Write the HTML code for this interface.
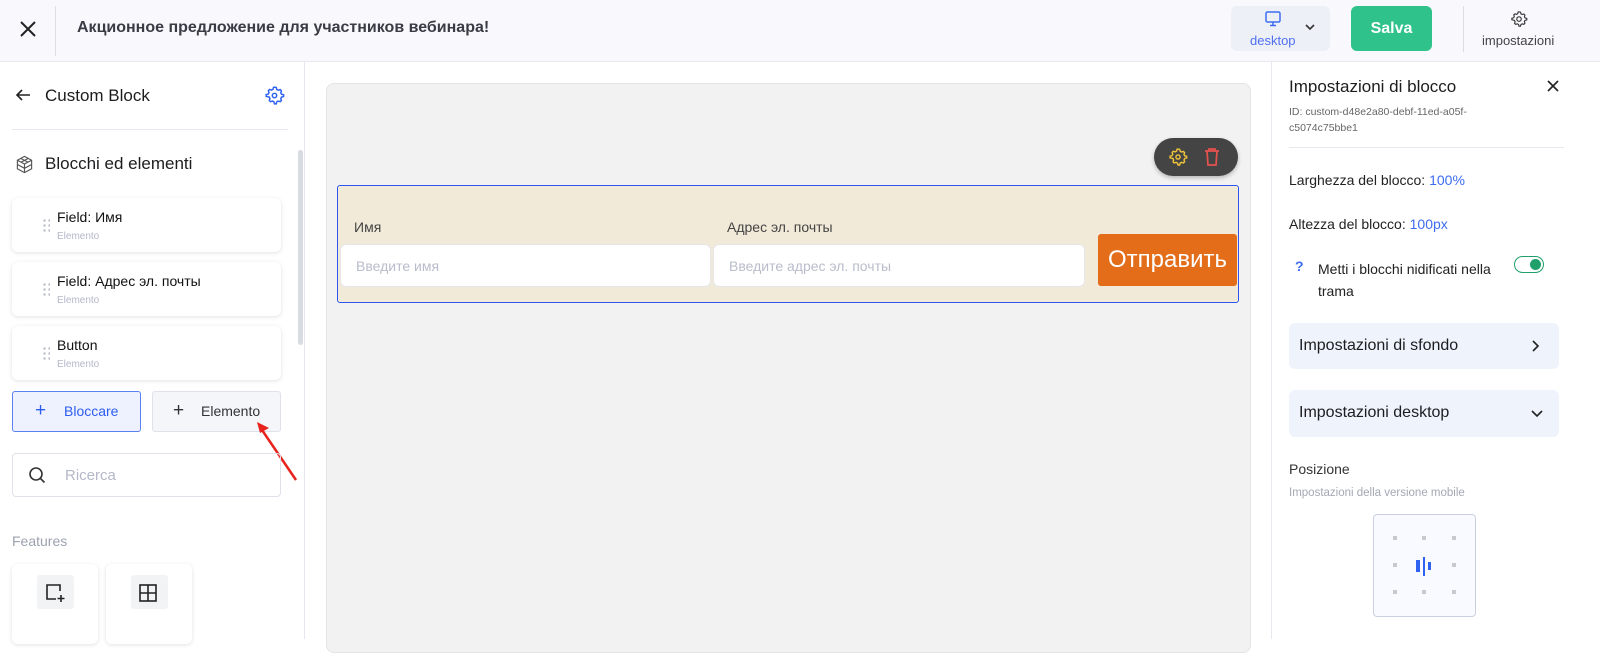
<!DOCTYPE html>
<html><head><meta charset="utf-8"><style>
*{box-sizing:border-box;margin:0;padding:0}
body{width:1600px;height:639px;overflow:hidden;font-family:"Liberation Sans","DejaVu Sans",sans-serif;background:#fff;position:relative;color:#1d1d1f}
.abs{position:absolute}
.top{left:0;top:0;width:1600px;height:62px;background:#f9f9fd;border-bottom:1px solid #e6e7ef}
.card{background:#fff;border-radius:6px;box-shadow:0 1px 4px rgba(0,0,0,.12)}
.it{left:12px;width:269px;height:54px}
.it .t{position:absolute;left:45px;top:11px;font-size:14px;color:#111}
.it .s{position:absolute;left:45px;top:33px;font-size:10px;color:#b4b8c8}
.it .d{position:absolute;left:30px;top:20px;width:8px;height:14px;background-image:radial-gradient(circle,#b8bcc8 1.2px,transparent 1.3px);background-size:5px 5px}
.dot{position:absolute;width:4px;height:4px;background:#c7c9cf}
</style></head><body>
<div class="abs top"></div>
<svg class="abs" style="left:18px;top:19px" width="20" height="20" viewBox="0 0 20 20"><path d="M3 3L17 17M17 3L3 17" stroke="#222" stroke-width="2"/></svg>
<div class="abs" style="left:55px;top:6px;width:1px;height:50px;background:#dedfe5"></div>
<div class="abs" style="left:77px;top:19px;font-size:16px;font-weight:bold;color:#3b3b45">Акционное предложение для участников вебинара!</div>
<div class="abs" style="left:1231px;top:6px;width:99px;height:45px;background:#eef0f8;border-radius:6px"></div>
<svg class="abs" style="left:1264px;top:11px" width="18" height="16" viewBox="0 0 18 16"><rect x="2" y="1" width="14" height="10" rx="1.5" fill="none" stroke="#3d6cf0" stroke-width="1.5"/><path d="M9 11v3M6 14.5h6" stroke="#3d6cf0" stroke-width="1.5"/></svg>
<div class="abs" style="left:1250px;top:33px;font-size:13px;color:#4f6ef0">desktop</div>
<svg class="abs" style="left:1304px;top:23px" width="12" height="8" viewBox="0 0 12 8"><path d="M2 2l4 4 4-4" stroke="#333" stroke-width="1.6" fill="none"/></svg>
<div class="abs" style="left:1351px;top:6px;width:81px;height:45px;background:#2fc28a;border-radius:6px;color:#fff;font-weight:bold;font-size:16px;text-align:center;line-height:45px">Salva</div>
<div class="abs" style="left:1463px;top:6px;width:1px;height:46px;background:#dcdde3"></div>
<svg class="abs" style="left:1510px;top:10px" width="18" height="18" viewBox="0 0 24 24"><path d="M12 2.5l2 .3.6 2.3 1.6.9 2.3-.7 1.4 1.4-.7 2.3.9 1.6 2.3.6v2l-2.3.6-.9 1.6.7 2.3-1.4 1.4-2.3-.7-1.6.9-.6 2.3h-2l-.6-2.3-1.6-.9-2.3.7-1.4-1.4.7-2.3-.9-1.6L2.5 13v-2l2.3-.6.9-1.6-.7-2.3 1.4-1.4 2.3.7 1.6-.9.6-2.3z" fill="none" stroke="#333" stroke-width="1.5"/><circle cx="12" cy="12" r="3" fill="none" stroke="#333" stroke-width="1.5"/></svg>
<div class="abs" style="left:1482px;top:33px;font-size:13px;color:#444">impostazioni</div>

<!-- left panel -->
<div class="abs" style="left:304px;top:62px;width:1px;height:577px;background:#e6e7ef"></div>
<div class="abs" style="left:298px;top:150px;width:5px;height:195px;background:#d9dbe2;border-radius:3px"></div>
<svg class="abs" style="left:15px;top:88px" width="16" height="14" viewBox="0 0 16 14"><path d="M15 7H2M7 2L2 7l5 5" stroke="#222" stroke-width="1.6" fill="none"/></svg>
<div class="abs" style="left:45px;top:86px;font-size:17px">Custom Block</div>
<svg class="abs" style="left:264px;top:85px" width="21" height="21" viewBox="0 0 24 24"><path d="M12 2.5l2 .3.6 2.3 1.6.9 2.3-.7 1.4 1.4-.7 2.3.9 1.6 2.3.6v2l-2.3.6-.9 1.6.7 2.3-1.4 1.4-2.3-.7-1.6.9-.6 2.3h-2l-.6-2.3-1.6-.9-2.3.7-1.4-1.4.7-2.3-.9-1.6L2.5 13v-2l2.3-.6.9-1.6-.7-2.3 1.4-1.4 2.3.7 1.6-.9.6-2.3z" fill="none" stroke="#2f62f0" stroke-width="1.7"/><circle cx="12" cy="12" r="2.5" fill="none" stroke="#2f62f0" stroke-width="1.7"/></svg>
<div class="abs" style="left:12px;top:129px;width:276px;height:1px;background:#e8e9ef"></div>
<svg class="abs" style="left:15px;top:155px" width="19" height="19" viewBox="0 0 20 20"><path d="M10 1.5l7.5 4v9L10 18.5l-7.5-4v-9z M2.5 5.5L10 9.5l7.5-4 M10 9.5v9 M6 3.5l7.5 4M14 3.5L6.5 7.5M2.5 10L10 14l7.5-4" fill="none" stroke="#555" stroke-width="1.2"/></svg>
<div class="abs" style="left:45px;top:154px;font-size:17px">Blocchi ed elementi</div>
<div class="abs card it" style="top:198px"><div class="d"></div><div class="t">Field: Имя</div><div class="s">Elemento</div></div>
<div class="abs card it" style="top:262px"><div class="d"></div><div class="t">Field: Адрес эл. почты</div><div class="s">Elemento</div></div>
<div class="abs card it" style="top:326px"><div class="d"></div><div class="t">Button</div><div class="s">Elemento</div></div>
<div class="abs" style="left:12px;top:391px;width:129px;height:41px;border:1px solid #5a80f2;background:#eef2fe;border-radius:3px;color:#2d5cf0;font-size:14px"><span style="position:absolute;left:22px;top:8px;font-size:19px">+</span><span style="position:absolute;left:51px;top:11px">Bloccare</span></div>
<div class="abs" style="left:152px;top:391px;width:129px;height:41px;border:1px solid #dfe2ea;background:#f4f6fa;border-radius:3px;color:#333;font-size:14px"><span style="position:absolute;left:20px;top:8px;font-size:19px">+</span><span style="position:absolute;left:48px;top:11px">Elemento</span></div>
<svg class="abs" style="left:250px;top:418px" width="50" height="66" viewBox="0 0 50 66"><path d="M46 62L12 12" stroke="#e8221c" stroke-width="2.5"/><path d="M7 4l12 6-9 5z" fill="#e8221c"/></svg>
<div class="abs" style="left:12px;top:453px;width:269px;height:44px;border:1px solid #dfe2ea;border-radius:4px"></div>
<svg class="abs" style="left:28px;top:466px" width="18" height="18" viewBox="0 0 18 18"><circle cx="8" cy="8" r="6" fill="none" stroke="#333" stroke-width="1.6"/><path d="M12.5 12.5l4 4" stroke="#333" stroke-width="1.6"/></svg>
<div class="abs" style="left:65px;top:467px;font-size:15px;color:#b4b8c8">Ricerca</div>
<div class="abs" style="left:12px;top:533px;font-size:14px;color:#9da2b0">Features</div>
<div class="abs card" style="left:12px;top:564px;width:86px;height:80px"></div>
<div class="abs card" style="left:106px;top:564px;width:86px;height:80px"></div>
<div class="abs" style="left:37px;top:575px;width:37px;height:34px;background:#f2f3f5;border-radius:3px"></div>
<div class="abs" style="left:131px;top:575px;width:37px;height:34px;background:#f2f3f5;border-radius:3px"></div>
<svg class="abs" style="left:44px;top:582px" width="22" height="22" viewBox="0 0 22 22"><path d="M16 9V3H3v14h9M17 13v7M13.5 16.5h7" fill="none" stroke="#222" stroke-width="1.6"/></svg>
<svg class="abs" style="left:138px;top:583px" width="20" height="20" viewBox="0 0 20 20"><rect x="2" y="2" width="16" height="16" fill="none" stroke="#222" stroke-width="1.6"/><path d="M10 2v16M2 10h16" stroke="#222" stroke-width="1.6"/></svg>

<!-- canvas -->
<div class="abs" style="left:326px;top:83px;width:925px;height:570px;background:#f2f2f2;border:1px solid #e4e4e6;border-radius:8px"></div>
<div class="abs" style="left:1154px;top:138px;width:84px;height:38px;background:#444;border-radius:19px;box-shadow:0 2px 4px rgba(0,0,0,.25)"></div>
<svg class="abs" style="left:1168px;top:147px" width="20" height="20" viewBox="0 0 24 24"><path d="M12 2.5l2 .3.6 2.3 1.6.9 2.3-.7 1.4 1.4-.7 2.3.9 1.6 2.3.6v2l-2.3.6-.9 1.6.7 2.3-1.4 1.4-2.3-.7-1.6.9-.6 2.3h-2l-.6-2.3-1.6-.9-2.3.7-1.4-1.4.7-2.3-.9-1.6L2.5 13v-2l2.3-.6.9-1.6-.7-2.3 1.4-1.4 2.3.7 1.6-.9.6-2.3z" fill="none" stroke="#f0c53a" stroke-width="1.7"/><circle cx="12" cy="12" r="2.5" fill="none" stroke="#f0c53a" stroke-width="1.7"/></svg>
<svg class="abs" style="left:1203px;top:147px" width="18" height="20" viewBox="0 0 18 20"><path d="M2 4h14M6 4V2h6v2M4 4l1 14h8l1-14" fill="none" stroke="#e9514f" stroke-width="1.7"/></svg>
<div class="abs" style="left:337px;top:185px;width:902px;height:118px;background:#f2ead9;border:1.5px solid #2f55f0;border-radius:3px"></div>
<div class="abs" style="left:354px;top:219px;font-size:14px;color:#444">Имя</div>
<div class="abs" style="left:727px;top:219px;font-size:14px;color:#444">Адрес эл. почты</div>
<div class="abs" style="left:340px;top:244px;width:371px;height:43px;background:#fff;border:1px solid #e6e6ea;border-radius:6px;font-size:14px;color:#b9bccb;padding:13px 0 0 15px">Введите имя</div>
<div class="abs" style="left:713px;top:244px;width:372px;height:43px;background:#fff;border:1px solid #e6e6ea;border-radius:6px;font-size:14px;color:#b9bccb;padding:13px 0 0 15px">Введите адрес эл. почты</div>
<div class="abs" style="left:1098px;top:234px;width:139px;height:52px;background:#e36d19;border-radius:3px;color:#fff;font-size:24px;text-align:center;line-height:52px">Отправить</div>

<!-- right panel -->
<div class="abs" style="left:1271px;top:62px;width:1px;height:577px;background:#e8e9ef"></div>
<div class="abs" style="left:1289px;top:77px;font-size:17px">Impostazioni di blocco</div>
<svg class="abs" style="left:1547px;top:80px" width="12" height="12" viewBox="0 0 12 12"><path d="M1 1l10 10M11 1L1 11" stroke="#222" stroke-width="1.6"/></svg>
<div class="abs" style="left:1289px;top:104px;font-size:10.5px;color:#666;line-height:16px">ID: custom-d48e2a80-debf-11ed-a05f-<br>c5074c75bbe1</div>
<div class="abs" style="left:1289px;top:147px;width:275px;height:1px;background:#e8e9ef"></div>
<div class="abs" style="left:1289px;top:172px;font-size:14px;color:#222">Larghezza del blocco: <span style="color:#3d6cf0">100%</span></div>
<div class="abs" style="left:1289px;top:216px;font-size:14px;color:#222">Altezza del blocco: <span style="color:#3d6cf0">100px</span></div>
<div class="abs" style="left:1295px;top:258px;font-size:14px;color:#3d6cf0;font-weight:bold">?</div>
<div class="abs" style="left:1318px;top:258px;font-size:14px;color:#222;line-height:22px;width:210px">Metti i blocchi nidificati nella trama</div>
<div class="abs" style="left:1514px;top:256px;width:30px;height:17px;border:1.5px solid #1fa06a;border-radius:9px"><div style="position:absolute;right:2px;top:2px;width:11px;height:11px;border-radius:50%;background:#1fa06a"></div></div>
<div class="abs" style="left:1289px;top:323px;width:270px;height:46px;background:#eef3fc;border-radius:6px;font-size:16px;padding:14px 0 0 10px">Impostazioni di sfondo</div>
<svg class="abs" style="left:1531px;top:339px" width="10" height="14" viewBox="0 0 10 14"><path d="M2 2l5 5-5 5" stroke="#222" stroke-width="1.6" fill="none"/></svg>
<div class="abs" style="left:1289px;top:390px;width:270px;height:47px;background:#eef3fc;border-radius:6px;font-size:16px;padding:14px 0 0 10px">Impostazioni desktop</div>
<svg class="abs" style="left:1530px;top:409px" width="14" height="10" viewBox="0 0 14 10"><path d="M2 2l5 5 5-5" stroke="#222" stroke-width="1.6" fill="none"/></svg>
<div class="abs" style="left:1289px;top:461px;font-size:14px;color:#333">Posizione</div>
<div class="abs" style="left:1289px;top:487px;font-size:11.5px;color:#a4a8b4">Impostazioni della versione mobile</div>
<div class="abs" style="left:1373px;top:514px;width:103px;height:103px;border:1px solid #c9d0e0;background:#f8faff;border-radius:4px"></div>
<div class="dot" style="left:1393px;top:536px"></div><div class="dot" style="left:1422px;top:536px"></div><div class="dot" style="left:1452px;top:536px"></div>
<div class="dot" style="left:1393px;top:563px"></div><div class="dot" style="left:1452px;top:563px"></div>
<div class="dot" style="left:1393px;top:590px"></div><div class="dot" style="left:1422px;top:590px"></div><div class="dot" style="left:1452px;top:590px"></div>
<div class="abs" style="left:1416px;top:560px;width:4px;height:12px;background:#2f62f0"></div>
<div class="abs" style="left:1423px;top:557px;width:2px;height:19px;background:#2f62f0"></div>
<div class="abs" style="left:1428px;top:562px;width:3px;height:8px;background:#2f62f0"></div>
</body></html>
